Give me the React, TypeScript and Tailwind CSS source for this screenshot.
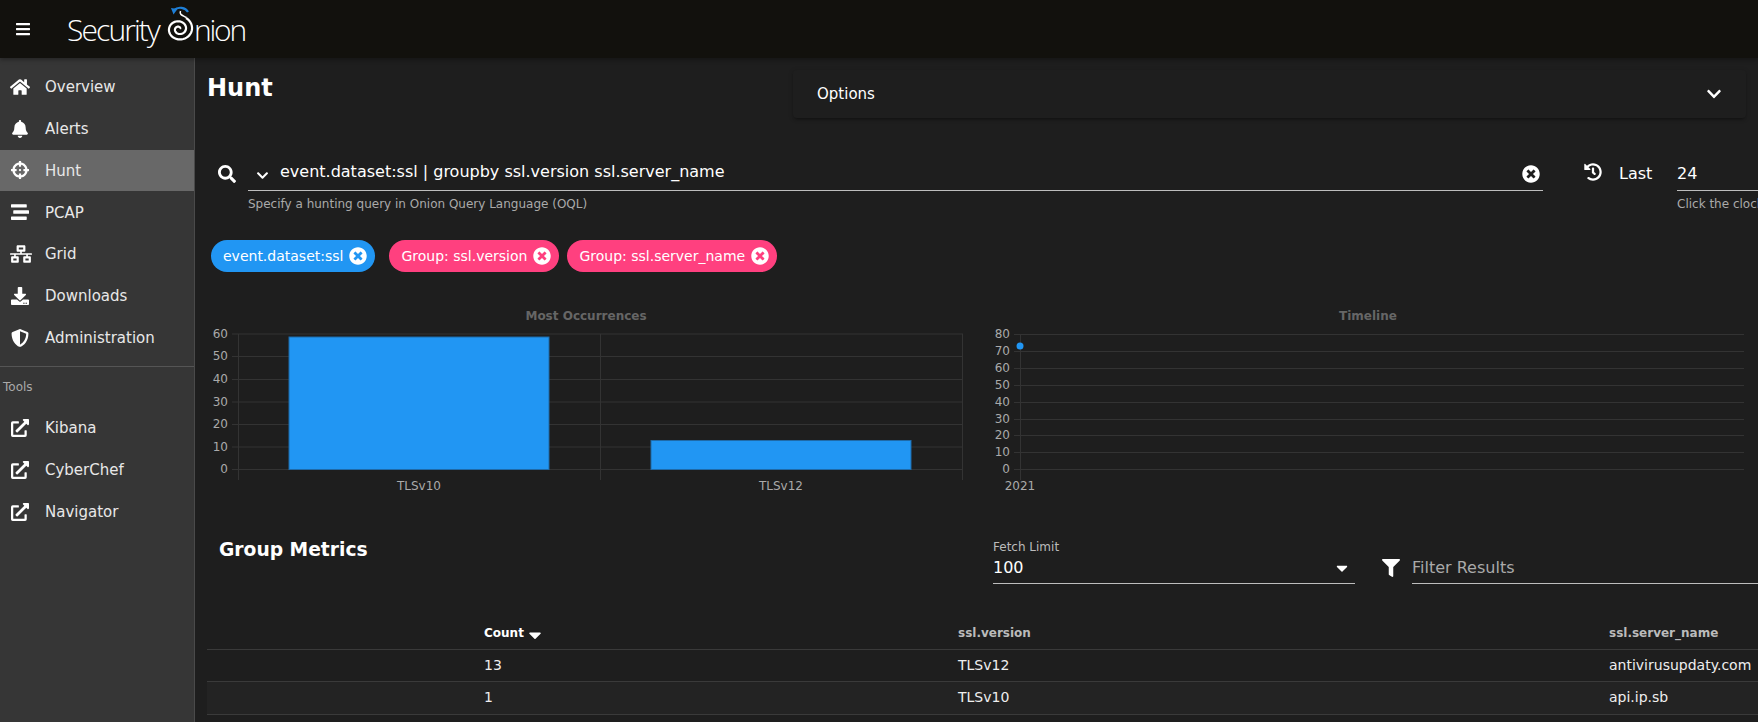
import {
  FaBars,
  FaBell,
  FaCaretDown,
  FaChevronDown,
  FaCrosshairs,
  FaDownload,
  FaExternalLinkAlt,
  FaFilter,
  FaHistory,
  FaHome,
  FaNetworkWired,
  FaSearch,
  FaShieldAlt,
  FaStream,
  FaTimesCircle,
} from 'react-icons/fa'

const NAV = [
  { label: 'Overview', icon: FaHome, size: 'text-[20px]' },
  { label: 'Alerts', icon: FaBell, size: 'text-[18px]' },
  { label: 'Hunt', icon: FaCrosshairs, size: 'text-[18px]', active: true },
  { label: 'PCAP', icon: FaStream, size: 'text-[18px]' },
  { label: 'Grid', icon: FaNetworkWired, size: 'text-[22px] pl-[1px]' },
  { label: 'Downloads', icon: FaDownload, size: 'text-[18px]' },
  { label: 'Administration', icon: FaShieldAlt, size: 'text-[18px]' },
]

const TOOLS = ['Kibana', 'CyberChef', 'Navigator']

const BAR_TICKS = [
  { label: '60', y: 334 },
  { label: '50', y: 356.5 },
  { label: '40', y: 379.5 },
  { label: '30', y: 402 },
  { label: '20', y: 424.5 },
  { label: '10', y: 447 },
  { label: '0', y: 469.5 },
]

const LINE_TICKS = [
  { label: '80', y: 334.5 },
  { label: '70', y: 351.5 },
  { label: '60', y: 368.5 },
  { label: '50', y: 385.5 },
  { label: '40', y: 402.5 },
  { label: '30', y: 419.5 },
  { label: '20', y: 435.5 },
  { label: '10', y: 452.5 },
  { label: '0', y: 469.5 },
]

// onion spiral, wound clockwise from the outer top right in to the centre
function spiralPath() {
  const pts: string[] = []
  for (let i = 0; i <= 90; i++) {
    const s = i / 90
    const angle = -Math.PI / 3 + s * Math.PI * 4.3
    const r = 13.5 - s * 12.5
    pts.push(`${(15 + r * 1.04 * Math.cos(angle)).toFixed(2)} ${(27 + r * 0.94 * Math.sin(angle)).toFixed(2)}`)
  }
  return 'M' + pts.join(' L')
}

function Logo() {
  return (
    <div className="ml-[36px] flex items-center font-['Open_Sans',sans-serif] text-[30px] font-light tracking-[-1.9px] text-white">
      <span className="w-[97px] shrink-0">Security</span>
      <svg width="32" height="42" viewBox="0 0 32 42" className="mt-[-12px] shrink-0">
        <path d="M10 8 A8.5 7 0 0 1 24 10" fill="none" stroke="#1e7fd6" strokeWidth="2.2" />
        <path d="M7 6 L13.5 7 L9.5 12.5 Z" fill="#1e7fd6" />
        <path d={spiralPath()} fill="none" stroke="#fff" strokeWidth="2.2" />
        <path d="M16.5 9 C15 13 19 13.5 22.5 15.5" fill="none" stroke="#fff" strokeWidth="1.5" />
      </svg>
      <span className="ml-[-2px] tracking-[-2.2px]">nion</span>
    </div>
  )
}

function Chip({ label, color }: { label: string; color: string }) {
  return (
    <span className={`flex h-[32px] items-center gap-[6px] rounded-full pl-[12px] pr-[8px] text-[14px] text-white ${color}`}>
      {label}
      <FaTimesCircle className="text-[18px]" />
    </span>
  )
}

function BarChart() {
  return (
    <svg width="770" height="200" viewBox="207 300 770 200" className="shrink-0">
      <text x="586" y="320" textAnchor="middle" fontSize="12" fontWeight="700" fill="#666">Most Occurrences</text>
      {BAR_TICKS.map((t) => (
        <g key={t.label}>
          <line x1="232" x2="963" y1={t.y} y2={t.y} stroke="#333" />
          <text x="228" y={t.y + 3.5} textAnchor="end" fontSize="12" fill="#aaa">{t.label}</text>
        </g>
      ))}
      <line x1="238.5" x2="238.5" y1="334" y2="480" stroke="#333" />
      <line x1="600.5" x2="600.5" y1="334" y2="480" stroke="#333" />
      <line x1="962.5" x2="962.5" y1="334" y2="480" stroke="#333" />
      <rect x="289" y="337" width="260" height="132.5" fill="#2196f3" stroke="#1f6aa8" />
      <rect x="651" y="440.5" width="260" height="29" fill="#2196f3" stroke="#1f6aa8" />
      <text x="419" y="490" textAnchor="middle" fontSize="12" fill="#aaa">TLSv10</text>
      <text x="781" y="490" textAnchor="middle" fontSize="12" fill="#aaa">TLSv12</text>
    </svg>
  )
}

function TimelineChart() {
  return (
    <svg width="781" height="200" viewBox="977 300 781 200" className="shrink-0">
      <text x="1368" y="320" textAnchor="middle" fontSize="12" fontWeight="700" fill="#666">Timeline</text>
      {LINE_TICKS.map((t) => (
        <g key={t.label}>
          <line x1="1014" x2="1744" y1={t.y} y2={t.y} stroke="#333" />
          <text x="1010" y={t.y + 3} textAnchor="end" fontSize="12" fill="#aaa">{t.label}</text>
        </g>
      ))}
      <line x1="1020.5" x2="1020.5" y1="334" y2="480" stroke="#333" />
      <circle cx="1020" cy="346" r="3.5" fill="#2196f3" />
      <text x="1020" y="490" textAnchor="middle" fontSize="12" fill="#aaa">2021</text>
    </svg>
  )
}

export default function App() {
  return (
    <div className="flex h-screen w-screen flex-col overflow-hidden bg-[#1e1e1e] font-['DejaVu_Sans',sans-serif] text-white">
      <header className="relative z-10 flex h-[58px] shrink-0 items-center bg-[#12110d] pl-[15px] shadow-[0_2px_4px_rgba(0,0,0,0.3)]">
        <FaBars className="shrink-0 text-[16px]" />
        <Logo />
      </header>

      <div className="flex min-h-0 flex-1">
        <aside className="w-[195px] shrink-0 border-r border-[#4a4a4a] bg-[#363636] pt-[8px] text-[15px] text-[#e8e8e8]">
          {NAV.map((item) => {
            const Icon = item.icon
            return (
              <div
                key={item.label}
                className={`flex h-[41.8px] items-center ${item.active ? 'bg-[#686868]' : ''}`}
              >
                <span className={`flex w-[40px] justify-center text-white ${item.size}`}>
                  <Icon />
                </span>
                <span className="ml-[5px] pt-[1px]">{item.label}</span>
              </div>
            )
          })}
          <div className="mt-[7px] border-t border-[#555]" />
          <div className="mt-[11px] pl-[3px] text-[12px] text-[#aaa]">Tools</div>
          <div className="mt-[12px]">
            {TOOLS.map((name) => (
              <div key={name} className="flex h-[41.8px] items-center">
                <span className="flex w-[40px] justify-center text-[18px] text-white">
                  <FaExternalLinkAlt />
                </span>
                <span className="ml-[5px]">{name}</span>
              </div>
            ))}
          </div>
        </aside>

        <main className="min-w-0 flex-1 overflow-hidden pl-[12px] pt-[12px]">
          <div className="flex items-start justify-between pr-[12px]">
            <h1 className="mt-[2px] text-[24px] leading-[32px] font-bold">Hunt</h1>
            <div className="flex h-[48px] w-[953px] items-center justify-between rounded-[4px] bg-[#1e1e1e] pl-[24px] pr-[24px] text-[15px] shadow-[0_3px_3px_-2px_rgba(0,0,0,0.35),0_1px_5px_0_rgba(0,0,0,0.2)]">
              Options
              <FaChevronDown className="text-[16px]" />
            </div>
          </div>

          <div className="mt-[39px] ml-[11px] flex">
            <FaSearch className="mt-[8px] shrink-0 text-[18px]" />
            <div className="ml-[12px] w-[1295px] shrink-0">
              <div className="flex h-[34px] items-start border-b border-[#bdbdbd] text-[16px]">
                <FaChevronDown className="ml-[8px] mt-[12px] shrink-0 text-[13px]" />
                <span className="ml-[11px] mt-[3px] flex-1 leading-[24px]">event.dataset:ssl | groupby ssl.version ssl.server_name</span>
                <FaTimesCircle className="mr-[3px] mt-[8px] shrink-0 text-[18px]" />
              </div>
              <p className="mt-[5px] text-[12px] leading-[16px] text-[#aaa]">Specify a hunting query in Onion Query Language (OQL)</p>
            </div>
            <FaHistory className="ml-[41px] mt-[6px] shrink-0 text-[18px]" />
            <span className="ml-[17px] mt-[5px] w-[58px] shrink-0 text-[16px] leading-[24px]">Last</span>
            <div className="w-[200px] shrink-0">
              <div className="h-[34px] border-b border-[#bdbdbd] pt-[5px] text-[16px] leading-[24px]">24</div>
              <p className="mt-[5px] whitespace-nowrap text-[12px] leading-[16px] text-[#aaa]">Click the clock icon to change</p>
            </div>
          </div>

          <div className="mt-[28px] ml-[4px] flex">
            <Chip label="event.dataset:ssl" color="bg-[#2196f3]" />
            <div className="ml-[14px] flex gap-[8px]">
              <Chip label="Group: ssl.version" color="bg-[#ff407f]" />
              <Chip label="Group: ssl.server_name" color="bg-[#ff407f]" />
            </div>
          </div>

          <div className="mt-[28px] flex">
            <BarChart />
            <TimelineChart />
          </div>

          <div className="mt-[39px] flex">
            <h2 className="mt-[-1px] w-[786px] shrink-0 pl-[12px] text-[18.7px] leading-[24px] font-bold">Group Metrics</h2>
            <div className="w-[362px] shrink-0 border-b border-[#bdbdbd]">
              <div className="text-[12px] leading-[16px] text-[#bbb]">Fetch Limit</div>
              <div className="flex h-[28px] items-center justify-between pb-[2px] pr-[4px] text-[16px]">
                100
                <FaCaretDown className="text-[18px]" />
              </div>
            </div>
            <div className="ml-[27px] flex flex-1 items-end">
              <FaFilter className="mb-[7px] shrink-0 text-[18px]" />
              <div className="ml-[12px] h-[29px] flex-1 border-b border-[#bdbdbd] text-[16px] leading-[26px] text-[#aaa]">Filter Results</div>
            </div>
          </div>

          <table className="mt-[33px] w-[1586px] table-fixed border-collapse text-left">
            <colgroup>
              <col className="w-[261px]" />
              <col className="w-[474px]" />
              <col className="w-[651px]" />
              <col className="w-[200px]" />
            </colgroup>
            <thead>
              <tr className="h-[32px] border-b border-[#3a3a3a] text-[12px] font-bold">
                <th />
                <th className="px-[16px]">
                  <span className="flex items-center gap-[1px] text-white">
                    Count
                    <FaCaretDown className="mt-[5px] text-[20px]" />
                  </span>
                </th>
                <th className="px-[16px] text-[#bbb]">ssl.version</th>
                <th className="px-[16px] text-[#bbb]">ssl.server_name</th>
              </tr>
            </thead>
            <tbody className="text-[14px] text-[#eee]">
              <tr className="h-[32px] border-b border-[#3a3a3a]">
                <td />
                <td className="px-[16px]">13</td>
                <td className="px-[16px]">TLSv12</td>
                <td className="whitespace-nowrap px-[16px]">antivirusupdaty.com</td>
              </tr>
              <tr className="h-[33px] border-b border-[#3a3a3a] bg-[#232323]">
                <td />
                <td className="px-[16px]">1</td>
                <td className="px-[16px]">TLSv10</td>
                <td className="whitespace-nowrap px-[16px]">api.ip.sb</td>
              </tr>
            </tbody>
          </table>
        </main>
      </div>
    </div>
  )
}
